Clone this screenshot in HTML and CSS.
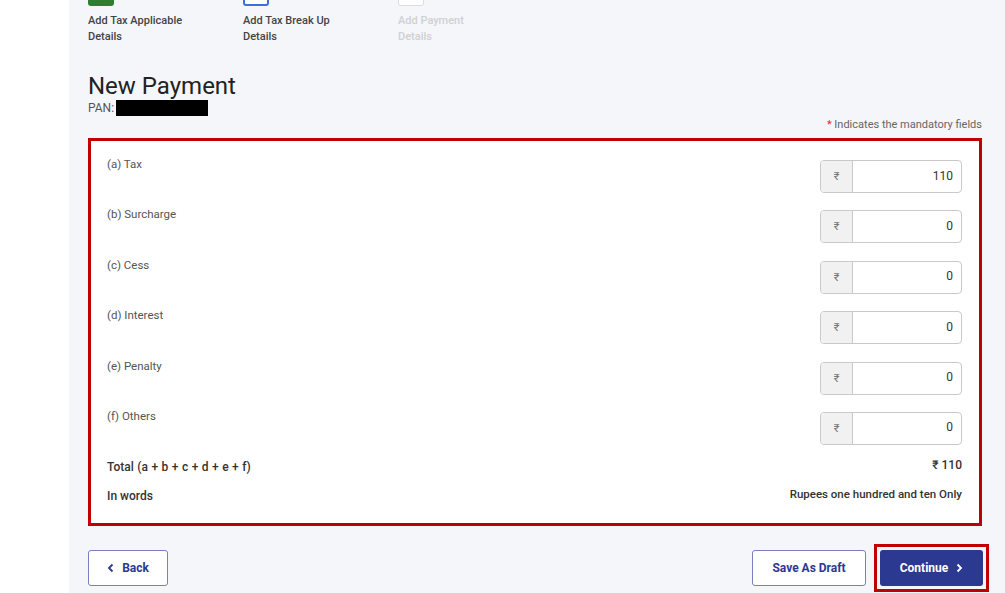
FILE: index.html
```html
<!DOCTYPE html>
<html lang="en">
<head>
    <meta charset="UTF-8">
    <meta name="viewport" content="width=device-width, initial-scale=1.0">
    <title>New Payment</title>
    <link rel="stylesheet" href="styles.css">
</head>
<body>
    <div class="page">
        <div class="stepper">
            <div class="step done">
                <div class="step-box"></div>
                <p>Add Tax Applicable<br>Details</p>
            </div>
            <div class="step active">
                <div class="step-box"></div>
                <p>Add Tax Break Up<br>Details</p>
            </div>
            <div class="step pending">
                <div class="step-box"></div>
                <p>Add Payment<br>Details</p>
            </div>
        </div>

        <h1>New Payment</h1>
        <div class="pan">PAN:<span class="redacted"></span></div>

        <div class="mandatory"><span class="star">*</span> Indicates the mandatory fields</div>

        <section class="breakup">
            <div class="row">
                <label for="tax">(a) Tax</label>
                <div class="amount"><span class="prefix">₹</span><input id="tax" value="110"></div>
            </div>
            <div class="row">
                <label for="surcharge">(b) Surcharge</label>
                <div class="amount"><span class="prefix">₹</span><input id="surcharge" value="0"></div>
            </div>
            <div class="row">
                <label for="cess">(c) Cess</label>
                <div class="amount"><span class="prefix">₹</span><input id="cess" value="0"></div>
            </div>
            <div class="row">
                <label for="interest">(d) Interest</label>
                <div class="amount"><span class="prefix">₹</span><input id="interest" value="0"></div>
            </div>
            <div class="row">
                <label for="penalty">(e) Penalty</label>
                <div class="amount"><span class="prefix">₹</span><input id="penalty" value="0"></div>
            </div>
            <div class="row">
                <label for="others">(f) Others</label>
                <div class="amount"><span class="prefix">₹</span><input id="others" value="0"></div>
            </div>

            <div class="summary total">
                <span>Total (a + b + c + d + e + f)</span>
                <span>₹ 110</span>
            </div>
            <div class="summary words">
                <span>In words</span>
                <span>Rupees one hundred and ten Only</span>
            </div>
        </section>

        <div class="actions">
            <button class="btn outline back">
                <svg width="8" height="10" viewBox="0 0 8 10"><path d="M5.5 1.5 2 5l3.5 3.5" fill="none" stroke="currentColor" stroke-width="1.8"/></svg>
                Back
            </button>
            <div class="right">
                <button class="btn outline">Save As Draft</button>
                <div class="highlight">
                    <button class="btn primary">
                        Continue
                        <svg width="8" height="10" viewBox="0 0 8 10"><path d="M2.5 1.5 6 5 2.5 8.5" fill="none" stroke="currentColor" stroke-width="1.8"/></svg>
                    </button>
                </div>
            </div>
        </div>
    </div>
</body>
</html>
```

FILE: styles.css
```css
:root {
    --navy: #2b3990;
    --navy-border: #7a80bd;
    --mark-red: #c00000;
    --page-bg: #f5f6f9;
}

body {
    margin: 0;
    background: #fff;
    font-family: Roboto, "Noto Sans", sans-serif;
    color: #333;
    overflow: hidden;
}

.page {
    margin-left: 69px;
    height: 593px;
    padding: 0 23px 0 19px;
    background: var(--page-bg);
    overflow: hidden;
}

.stepper {
    display: flex;
    margin-top: -14px;
}

.step {
    width: 155px;
}

.step-box {
    width: 26px;
    height: 20px;
    box-sizing: border-box;
    border-radius: 3px;
}

.step.done .step-box {
    background: #2e7d32;
}

.step.active .step-box {
    border: 2px solid #3c70d8;
    background: #fff;
}

.step.pending .step-box {
    border: 1px solid #dcdcdc;
    background: #fff;
}

.step p {
    margin: 7px 0 0;
    font-size: 11px;
    line-height: 16px;
    font-weight: 500;
    color: #444;
}

.step.pending p {
    color: #cfd0d3;
}

h1 {
    margin: 27px 0 0;
    font-size: 24px;
    line-height: 28px;
    font-weight: 400;
    color: #222;
}

.pan {
    display: flex;
    align-items: center;
    font-size: 12px;
    line-height: 16px;
    color: #555;
}

.redacted {
    display: inline-block;
    width: 92px;
    height: 16px;
    margin-left: 2px;
    background: #000;
}

.mandatory {
    margin-top: 2px;
    text-align: right;
    font-size: 11px;
    line-height: 14px;
    color: #666;
}

.star {
    color: #d32f2f;
}

.breakup {
    margin-top: 6px;
    border: 3px solid var(--mark-red);
    background: #fff;
    padding: 19px 17px 19px 16px;
}

.row {
    display: flex;
    justify-content: space-between;
    align-items: flex-start;
    height: 33px;
    margin-bottom: 17.4px;
}

.row label {
    margin-top: -4px;
    font-size: 11.5px;
    line-height: 16px;
    color: #555;
}

.amount {
    display: flex;
    width: 142px;
    height: 33px;
    box-sizing: border-box;
    border: 1px solid #c9c9c9;
    border-radius: 4px;
    overflow: hidden;
    background: #fff;
}

.prefix {
    width: 31px;
    flex: none;
    display: flex;
    align-items: center;
    justify-content: center;
    background: #f1f1f1;
    border-right: 1px solid #c9c9c9;
    font-size: 11px;
    color: #777;
}

.amount input {
    flex: 1;
    min-width: 0;
    border: 0;
    padding: 0 8px 2px 0;
    text-align: right;
    font-family: inherit;
    font-size: 12px;
    color: #333;
    background: transparent;
    outline: none;
}

.summary {
    display: flex;
    justify-content: space-between;
    align-items: center;
    font-size: 12px;
    line-height: 16px;
    font-weight: 500;
    color: #333;
}

.summary.total {
    margin-top: -3px;
}

.summary.total span:first-child {
    word-spacing: 0.5px;
}

.summary.words {
    margin-top: 13px;
}

.summary span:last-child {
    margin-top: -4px;
}

.summary.words span:last-child {
    font-size: 11.5px;
}

.actions {
    display: flex;
    justify-content: space-between;
    align-items: center;
    margin-top: 18px;
}

.right {
    display: flex;
    align-items: center;
    gap: 8px;
    margin-right: -7px;
}

.btn {
    height: 36px;
    box-sizing: border-box;
    border-radius: 3px;
    font-family: inherit;
    font-size: 12px;
    font-weight: 700;
    display: inline-flex;
    align-items: center;
    justify-content: center;
    gap: 7px;
    cursor: pointer;
}

.btn.outline {
    background: #fff;
    border: 1px solid var(--navy-border);
    color: var(--navy);
}

.btn.back {
    width: 80px;
}

.right .btn.outline {
    width: 114px;
}

.btn.primary {
    width: 103px;
    border: 0;
    background: var(--navy);
    color: #fff;
}

.highlight {
    border: 3px solid var(--mark-red);
    padding: 3px;
    display: flex;
}
```
